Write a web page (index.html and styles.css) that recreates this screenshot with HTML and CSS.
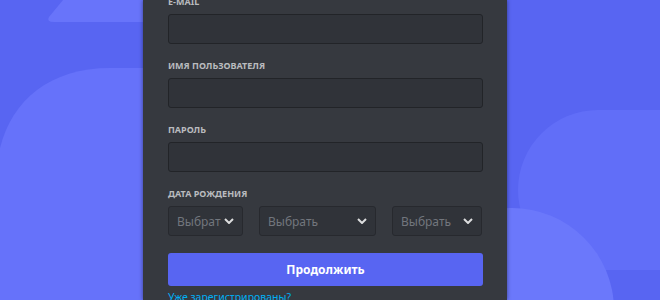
FILE: index.html
```html
<!DOCTYPE html>
<html lang="ru">
<head>
    <meta charset="UTF-8">
    <meta name="viewport" content="width=device-width, initial-scale=1.0">
    <title>Регистрация</title>
    <link rel="stylesheet" href="styles.css">
</head>
<body>
    <!-- Background art -->
    <svg class="backdrop" width="660" height="300" viewBox="0 0 660 300" aria-hidden="true">
        <path d="M63 0 L49 17 Q46 22 54 22 L200 22 L200 0 Z" fill="#6874fa"/>
        <path d="M0 148 C12 100 50 68 110 68 L200 68 L200 300 L0 300 Z" fill="#6672fa"/>
        <rect x="518" y="110" width="260" height="160" rx="80" fill="#616ef8"/>
        <circle cx="512" cy="310" r="102" fill="#6b78fb"/>
    </svg>

    <div class="page">
        <div class="panel">
            <form class="register-form">
                <div class="field">
                    <label class="field-label">E-mail</label>
                    <div class="input"></div>
                </div>
                <div class="field">
                    <label class="field-label">Имя пользователя</label>
                    <div class="input"></div>
                </div>
                <div class="field">
                    <label class="field-label">Пароль</label>
                    <div class="input"></div>
                </div>
                <div class="field">
                    <label class="field-label">Дата рождения</label>
                    <div class="date-row">
                        <div class="select">
                            <span class="select-text">Выбрать</span>
                            <svg class="chevron" width="10" height="6" viewBox="0 0 10 6"><path d="M1 1 L5 5 L9 1" fill="none" stroke="#dcddde" stroke-width="2"/></svg>
                        </div>
                        <div class="select">
                            <span class="select-text">Выбрать</span>
                            <svg class="chevron" width="10" height="6" viewBox="0 0 10 6"><path d="M1 1 L5 5 L9 1" fill="none" stroke="#dcddde" stroke-width="2"/></svg>
                        </div>
                        <div class="select">
                            <span class="select-text">Выбрать</span>
                            <svg class="chevron" width="10" height="6" viewBox="0 0 10 6"><path d="M1 1 L5 5 L9 1" fill="none" stroke="#dcddde" stroke-width="2"/></svg>
                        </div>
                    </div>
                </div>
                <button type="button" class="submit-btn">Продолжить</button>
                <a href="#" class="login-link">Уже зарегистрированы?</a>
            </form>
        </div>
    </div>
</body>
</html>
```

FILE: styles.css
```css
* {
    margin: 0;
    padding: 0;
    box-sizing: border-box;
}

body {
    font-family: 'Noto Sans', 'Liberation Sans', sans-serif;
    background: #5865f2;
    height: 300px;
    overflow: hidden;
    position: relative;
}

/* Background art */
.backdrop {
    position: absolute;
    top: 0;
    left: 0;
}

.page {
    position: relative;
    display: flex;
    height: 100%;
    padding-left: 143px;
}

.panel {
    width: 364px;
    height: 100%;
    background: #36393f;
    padding: 0 24px 0 25px;
    box-shadow: 0 0 4px rgba(0, 0, 0, 0.45);
    overflow: hidden;
}

.register-form {
    display: flex;
    flex-direction: column;
    margin-top: -4px;
}

.field {
    margin-bottom: 16px;
}

.field-label {
    display: block;
    font-size: 9px;
    line-height: 12px;
    font-weight: 700;
    color: #b9bbbe;
    text-transform: uppercase;
    margin-bottom: 6px;
}

.input {
    height: 30px;
    background: #303339;
    border: 1px solid #222428;
    border-radius: 3px;
}

/* Birth date */
.date-row {
    display: grid;
    grid-template-columns: 75px 117px 90px;
    column-gap: 16px;
}

.select {
    height: 30px;
    background: #303339;
    border: 1px solid #27292e;
    border-radius: 3px;
    display: flex;
    align-items: center;
    padding: 0 8px;
    gap: 3px;
}

.select-text {
    flex: 1;
    min-width: 0;
    overflow: hidden;
    white-space: nowrap;
    font-size: 12px;
    color: #72767d;
}

.chevron {
    flex: none;
}

.submit-btn {
    margin-top: 1px;
    height: 33px;
    background: #5865f2;
    border: none;
    border-radius: 3px;
    color: #fff;
    font-family: inherit;
    font-size: 12px;
    font-weight: 700;
}

.login-link {
    margin-top: 4px;
    font-size: 10.5px;
    line-height: 14px;
    color: #00aff4;
    text-decoration: none;
}
```
